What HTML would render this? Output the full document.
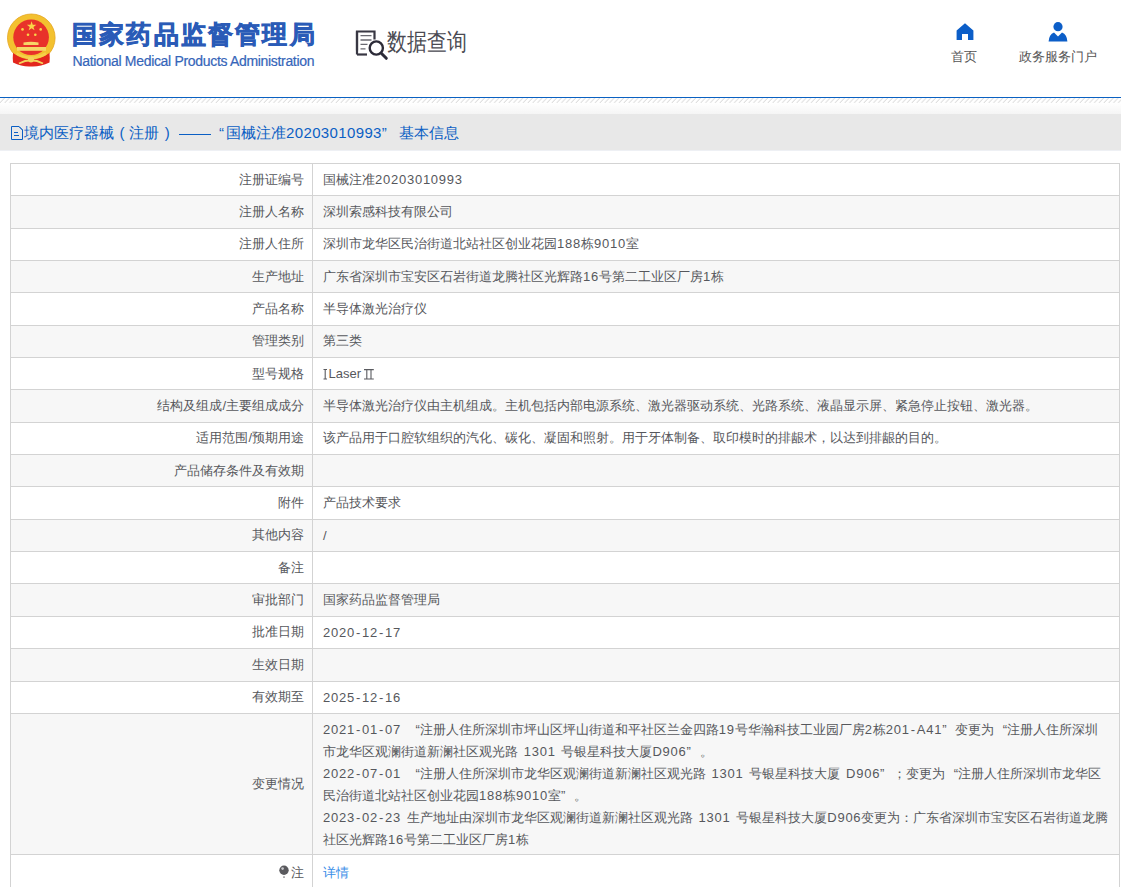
<!DOCTYPE html>
<html><head><meta charset="utf-8">
<style>
*{margin:0;padding:0;box-sizing:border-box}
html,body{width:1121px;height:887px;overflow:hidden;background:#fff;font-family:"Liberation Sans",sans-serif;}
.a{position:absolute;white-space:nowrap}
.t1{left:72px;top:16px;font-size:25px;font-weight:bold;color:#2a5bb7;-webkit-text-stroke:0.7px #2a5bb7;letter-spacing:2.2px;line-height:36px}
.t2{left:72.5px;top:53.5px;font-size:14px;letter-spacing:-0.32px;color:#3565b9;line-height:15px;-webkit-text-stroke:0.2px #3565b9}
.sqt{left:386.6px;top:25.6px;font-size:23.5px;color:#4a4a52;line-height:32px;transform:scaleX(0.83);transform-origin:0 0;font-weight:500}
.nav{font-size:13px;color:#555;line-height:18px;text-align:center}
.bl{left:0;top:97px;width:1121px;height:1px;background:#0a61c2}
.grad{left:0;top:103px;width:1121px;height:11px;background:linear-gradient(#fff,#f5f5f5)}
.bc{left:0;top:114px;width:1121px;height:36px;background:#e8e8e8}
.bc2{left:0;top:150px;width:1121px;height:1px;background:#eef0f4}
.b{font-size:15px;color:#0b5fc4;line-height:18px;top:124px}
table{position:absolute;left:10px;top:163px;width:1110px;border-collapse:collapse;font-size:13px;color:#56575c}
td{border:1px solid #d3d3d3;height:32.35px;padding:0 10px;vertical-align:middle;white-space:nowrap}
td.l{width:302px;text-align:right;padding-right:8px}
tr:nth-child(even) td{background:#f7f7f7}
td.multi{line-height:22px;padding:5px 10px 3px}
.n{letter-spacing:0.75px;word-spacing:1.4px}
.h{margin:0 1px}
.q1{display:inline-block;width:13px;text-align:right}
.q2{display:inline-block;width:13px;text-align:left}
.m div{white-space:nowrap}
a{color:#3b8ee8;text-decoration:none}
</style></head><body>
<svg class="a" style="left:0;top:0" width="70" height="75" viewBox="0 0 70 75">
  <circle cx="31.3" cy="37.8" r="23.8" fill="#f3c12f" stroke="#e4a51e" stroke-width="0.8"/>
  <circle cx="31.1" cy="37.3" r="17.8" fill="#e8322a"/>
  <path d="M31.6 21.3l1.15 3.45h3.6l-2.9 2.15 1.1 3.45-2.95-2.15-2.95 2.15 1.1-3.45-2.9-2.15h3.6z" fill="#f9d548"/>
  <circle cx="22.5" cy="29.4" r="1.3" fill="#f9d548"/><circle cx="40.7" cy="29.4" r="1.3" fill="#f9d548"/>
  <circle cx="28" cy="34.8" r="1.3" fill="#f9d548"/><circle cx="35.3" cy="34.8" r="1.3" fill="#f9d548"/>
  <path d="M23.5 45V42.5Q31 41 38.5 42.5V45z" fill="#f7d667"/>
  <rect x="17" y="47" width="29" height="3.8" fill="#f7d667"/>
  <path d="M13 53Q12.5 58 13 62.5Q22 67 31 66.5Q40 67 49.5 62.5Q50 58 49.5 53Q31 66 13 53z" fill="#e3261d"/>
  <path d="M16.5 53.5Q31 62 46 53.5" fill="none" stroke="#f5cf4a" stroke-width="2.6"/>
  <path d="M19 63.5Q31 57 43 63.5" fill="none" stroke="#f5d35c" stroke-width="1.8"/>
  <circle cx="31" cy="59.5" r="3" fill="#f5d35c"/>
</svg>
<div class="a t1">国家药品监督管理局</div>
<div class="a t2">National Medical Products Administration</div>
<svg class="a" style="left:350px;top:25px" width="45" height="40" viewBox="350 25 45 40">
  <path d="M357 50.5V31.5h17.5v8" fill="none" stroke="#383743" stroke-width="2.2"/>
  <path d="M357 54.5h10" fill="none" stroke="#383743" stroke-width="2.2"/>
  <path d="M357 31.5v23" fill="none" stroke="#383743" stroke-width="2.2"/>
  <path d="M360.5 35.6h11M360.5 40h11M360.5 44.4h7M360.5 48.8h5" stroke="#6a6a72" stroke-width="1.3"/>
  <circle cx="376.3" cy="48" r="6.6" fill="#fff" stroke="#2c2b38" stroke-width="2.4"/>
  <path d="M381.3 53.3l5 5" stroke="#2c2b38" stroke-width="3" stroke-linecap="round"/>
</svg>
<div class="a sqt">数据查询</div>
<svg class="a" style="left:956px;top:23px" width="18" height="17" viewBox="0 0 18 17"><path d="M9 0.2L17.4 7.6V17H12V11H6V17H0.6V7.6Z" fill="#0c5ec8"/></svg>
<div class="a nav" style="left:939px;top:48px;width:50px">首页</div>
<svg class="a" style="left:1048px;top:22px" width="20" height="20" viewBox="0 0 20 20"><circle cx="10" cy="4.7" r="4.6" fill="#0c5ec8"/><path d="M0.6 19.5Q1 12.5 6 10.5L10 14.5L14 10.5Q19 12.5 19.4 19.5Z" fill="#0c5ec8"/></svg>
<div class="a nav" style="left:1008px;top:48px;width:100px">政务服务门户</div>
<div class="a bl"></div>
<svg class="a" style="left:0;top:98px" width="1121" height="5">
 <defs><pattern id="hp" width="4.8" height="5" patternUnits="userSpaceOnUse"><path d="M-0.5 5.2L4.7 -0.2M4.3 5.2L9.5 -0.2" stroke="#cccccc" stroke-width="0.9"/></pattern></defs>
 <rect width="1121" height="5" fill="url(#hp)"/>
</svg>
<div class="a grad"></div>
<div class="a bc"></div>
<div class="a bc2"></div>
<svg class="a" style="left:11px;top:126px" width="12" height="14" viewBox="0 0 12 14"><path d="M0.5 0.5h7.5l3.5 3.5v9.5h-11z" fill="none" stroke="#0b5fc4" stroke-width="1"/><path d="M8 0.5l3.5 3.5" stroke="#0b5fc4"/><path d="M3 6.5h4M3 9.5h5" stroke="#0b5fc4"/></svg>
<div class="a b" style="left:24px">境内医疗器械</div>
<div class="a b" style="left:119.5px">(</div>
<div class="a b" style="left:129px">注册</div>
<div class="a b" style="left:164.7px">)</div>
<div class="a" style="left:179px;top:134px;width:32px;height:1px;background:#0b5fc4"></div>
<div class="a b" style="left:219px">“</div>
<div class="a b" style="left:226px">国械注准<span style="letter-spacing:0.37px">20203010993</span>”</div>
<div class="a b" style="left:399px">基本信息</div>
<table>
<tr><td class="l">注册证编号</td><td>国械注准<span class="n">20203010993</span></td></tr>
<tr><td class="l">注册人名称</td><td>深圳索感科技有限公司</td></tr>
<tr><td class="l">注册人住所</td><td>深圳市龙华区民治街道北站社区创业花园<span class="n">188</span>栋<span class="n">9010</span>室</td></tr>
<tr><td class="l">生产地址</td><td>广东省深圳市宝安区石岩街道龙腾社区光辉路<span class="n">16</span>号第二工业区厂房<span class="n">1</span>栋</td></tr>
<tr><td class="l">产品名称</td><td>半导体激光治疗仪</td></tr>
<tr><td class="l">管理类别</td><td>第三类</td></tr>
<tr><td class="l">型号规格</td><td><svg width="5" height="11" viewBox="0 0 5 11" style="vertical-align:-1.7px;margin-right:0.5px"><path d="M0.5 0.5H4M0.5 10H4M2.2 0.5V10" stroke="#5a5b60" stroke-width="1.1" fill="none"/></svg><span>Laser</span><svg width="11" height="11" viewBox="0 0 11 11" style="vertical-align:-1.7px;margin-left:2.7px"><path d="M0 0.6H9.8M0 10H9.8M2.8 0.6V10M7 0.6V10" stroke="#5a5b60" stroke-width="1.1" fill="none"/></svg></td></tr>
<tr><td class="l">结构及组成/主要组成成分</td><td>半导体激光治疗仪由主机组成。主机包括内部电源系统、激光器驱动系统、光路系统、液晶显示屏、紧急停止按钮、激光器。</td></tr>
<tr><td class="l">适用范围/预期用途</td><td>该产品用于口腔软组织的汽化、碳化、凝固和照射。用于牙体制备、取印模时的排龈术，以达到排龈的目的。</td></tr>
<tr><td class="l">产品储存条件及有效期</td><td></td></tr>
<tr><td class="l">附件</td><td>产品技术要求</td></tr>
<tr><td class="l">其他内容</td><td>/</td></tr>
<tr><td class="l">备注</td><td></td></tr>
<tr><td class="l">审批部门</td><td>国家药品监督管理局</td></tr>
<tr><td class="l">批准日期</td><td><span class="n">2020<span class="h">-</span>12<span class="h">-</span>17</span></td></tr>
<tr><td class="l">生效日期</td><td></td></tr>
<tr><td class="l">有效期至</td><td><span class="n">2025<span class="h">-</span>12<span class="h">-</span>16</span></td></tr>
<tr><td class="l">变更情况</td><td class="multi"><div id="m1"><span class="n">2021<span class="h">-</span>01<span class="h">-</span>07 </span><span class="q1">“</span>注册人住所深圳市坪山区坪山街道和平社区兰金四路<span class="n">19</span>号华瀚科技工业园厂房<span class="n">2</span>栋<span class="n">201<span class="h">-</span>A41</span><span class="q2">”</span>变更为<span class="q1">“</span>注册人住所深圳</div><div id="m2">市龙华区观澜街道新澜社区观光路<span class="n"> 1301 </span>号银星科技大厦<span class="n">D906</span><span class="q2">”</span>。</div><div id="m3"><span class="n">2022<span class="h">-</span>07<span class="h">-</span>01 </span><span class="q1">“</span>注册人住所深圳市龙华区观澜街道新澜社区观光路<span class="n"> 1301 </span>号银星科技大厦<span class="n"> D906</span><span class="q2">”</span>；变更为<span class="q1">“</span>注册人住所深圳市龙华区</div><div id="m4">民治街道北站社区创业花园<span class="n">188</span>栋<span class="n">9010</span>室<span class="q2">”</span>。</div><div id="m5"><span class="n">2023<span class="h">-</span>02<span class="h">-</span>23 </span>生产地址由深圳市龙华区观澜街道新澜社区观光路<span class="n"> 1301 </span>号银星科技大厦<span class="n">D906</span>变更为：广东省深圳市宝安区石岩街道龙腾</div><div id="m6">社区光辉路<span class="n">16</span>号第二工业区厂房<span class="n">1</span>栋</div></td></tr>
<tr style="height:44px"><td class="l" style="vertical-align:top;padding-top:9px"><svg width="11" height="14" viewBox="0 0 11 14" style="vertical-align:-2px;margin-right:1px"><circle cx="5" cy="5.3" r="4.7" fill="#5a5a5e"/><circle cx="3.6" cy="3.6" r="1.3" fill="#c8c8cc"/><rect x="4" y="11.5" width="2" height="1.2" fill="#8a8a8e"/></svg>注</td><td style="vertical-align:top;padding-top:9px"><a>详情</a></td></tr>
</table>
</body></html>
